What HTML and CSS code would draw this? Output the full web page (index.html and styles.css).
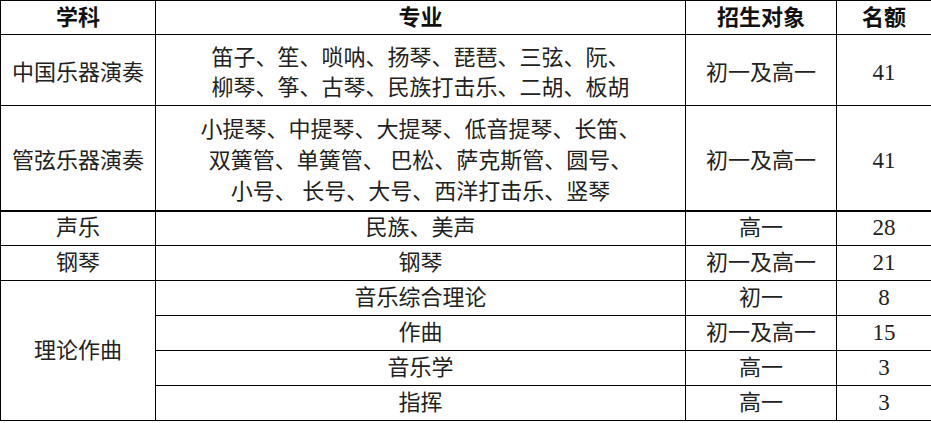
FILE: index.html
```html
<!DOCTYPE html>
<html lang="zh">
<head>
<meta charset="utf-8">
<link rel="stylesheet" href="styles.css">
</head>
<body>
<table class="plan">
  <colgroup>
    <col class="c1"><col class="c2"><col class="c3"><col class="c4">
  </colgroup>
  <thead>
    <tr class="head"><th>学科</th><th>专业</th><th>招生对象</th><th>名额</th></tr>
  </thead>
  <tbody>
    <tr class="r2">
      <td>中国乐器演奏</td>
      <td>笛子、笙、唢呐、扬琴、琵琶、三弦、阮、<br>柳琴、筝、古琴、民族打击乐、二胡、板胡</td>
      <td>初一及高一</td><td class="num">41</td>
    </tr>
    <tr class="r3 thick">
      <td>管弦乐器演奏</td>
      <td>小提琴、中提琴、大提琴、低音提琴、长笛、<br>双簧管、单簧管、 巴松、萨克斯管、圆号、<br>小号、 长号、大号、西洋打击乐、竖琴</td>
      <td>初一及高一</td><td class="num">41</td>
    </tr>
    <tr class="r1">
      <td>声乐</td><td>民族、美声</td><td>高一</td><td class="num">28</td>
    </tr>
    <tr class="r1">
      <td>钢琴</td><td>钢琴</td><td>初一及高一</td><td class="num">21</td>
    </tr>
    <tr class="r1">
      <td rowspan="4">理论作曲</td><td>音乐综合理论</td><td>初一</td><td class="num">8</td>
    </tr>
    <tr class="r1">
      <td>作曲</td><td>初一及高一</td><td class="num">15</td>
    </tr>
    <tr class="r1">
      <td>音乐学</td><td>高一</td><td class="num">3</td>
    </tr>
    <tr class="r1">
      <td>指挥</td><td>高一</td><td class="num">3</td>
    </tr>
  </tbody>
</table>
</body>
</html>
```

FILE: styles.css
```css
html, body {
  margin: 0;
  padding: 0;
  background: #ffffff;
}

.plan {
  border-collapse: collapse;
  table-layout: fixed;
  width: 931px;
  font-family: "Liberation Serif", "Noto Sans CJK SC", serif;
  font-size: 22px;
  color: #222;
}

.c1 { width: 155px; }
.c2 { width: 530px; }
.c3 { width: 151px; }
.c4 { width: 95px; }

.plan th,
.plan td {
  border: 1px solid #000;
  padding: 0;
  text-align: center;
  vertical-align: middle;
  line-height: 30px;
}

.plan th {
  font-weight: 700;
  color: #111;
}

.head { height: 34px; }
.r2 { height: 71px; }
.r3 { height: 105px; }
.r2 td,
.r3 td { padding-top: 6px; }
.r3 td { line-height: 31px; }
.thick td { border-bottom: 2px solid #000; }
.r1 { height: 35px; }

.num {
  font-size: 23px;
}
```
